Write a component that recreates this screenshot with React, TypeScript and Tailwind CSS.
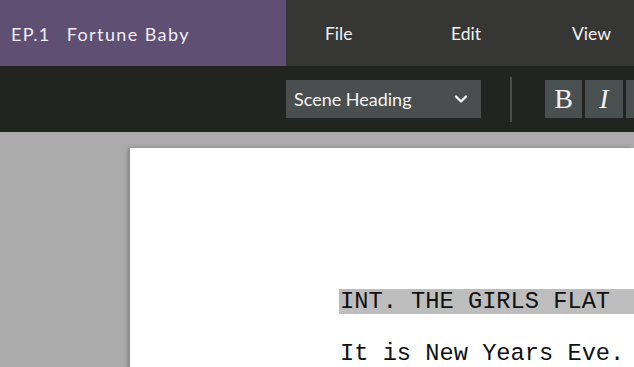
import React from "react";

export default function App() {
  return (
    <div className="w-[634px] h-[367px] overflow-hidden bg-[#ababab] flex flex-col" style={{ fontFamily: "Lato, 'Noto Sans', sans-serif" }}>
      {/* Menu bar */}
      <div className="flex h-[66px] shrink-0 bg-[#363735]">
        <div className="w-[286px] shrink-0 bg-[#5f5073] flex items-center pl-[11px] pt-[3px] text-[18px] tracking-[1.4px] text-[#f1eef4]">
          <span>EP.1</span>
          <span className="ml-[16px]">Fortune Baby</span>
        </div>
        <div className="flex-1 grid grid-cols-[126px_121px_auto] items-center pl-[39px] pt-[3px] text-[17.5px] text-[#f2f2f2]">
          <span>File</span>
          <span>Edit</span>
          <span>View</span>
        </div>
      </div>
      {/* Toolbar */}
      <div className="flex h-[66px] shrink-0 bg-[#222421] items-start">
        <div className="ml-[286px] mt-[14px] w-[195px] h-[38px] shrink-0 bg-[#4a4e4e] flex items-center justify-between pl-[8px] pr-[13px] text-[18px] text-[#f4f4f4]">
          <span>Scene Heading</span>
          <svg width="14" height="10" viewBox="0 0 14 10" fill="none">
            <path d="M2 2.5 L7 7.5 L12 2.5" stroke="#f4f4f4" strokeWidth="2.4" strokeLinecap="round" strokeLinejoin="round" />
          </svg>
        </div>
        <div className="ml-[29px] mt-[11px] w-[2px] h-[45px] shrink-0 bg-[#4b4d4b]" />
        <div className="ml-[33px] mt-[14px] flex gap-[3px] shrink-0">
          <div className="w-[37px] h-[38px] bg-[#4a4f4f] flex items-center justify-center text-[28px] text-[#f2f2f2]" style={{ fontFamily: "'Liberation Serif', serif" }}>B</div>
          <div className="w-[38px] h-[38px] bg-[#4a4f4f] flex items-center justify-center text-[28px] italic text-[#f2f2f2]" style={{ fontFamily: "'Liberation Serif', serif" }}>I</div>
          <div className="w-[38px] h-[38px] bg-[#4a4f4f]" />
        </div>
      </div>
      {/* Workspace */}
      <div className="flex-1 pl-[130px] pt-[16px]">
        <div className="h-[400px] bg-white shadow-[-2px_0_4px_rgba(0,0,0,0.25)] pt-[141px] pl-[209px] text-[23.7px] text-[#111111]" style={{ fontFamily: "'Liberation Mono', 'Courier New', monospace" }}>
          <div className="bg-[#bdbdbd] h-[25px] leading-[25px] pl-[1px] whitespace-nowrap">INT. THE GIRLS FLAT</div>
          <div className="mt-[27px] h-[25px] leading-[25px] pl-[1px] whitespace-nowrap">It is New Years Eve.</div>
        </div>
      </div>
    </div>
  );
}
